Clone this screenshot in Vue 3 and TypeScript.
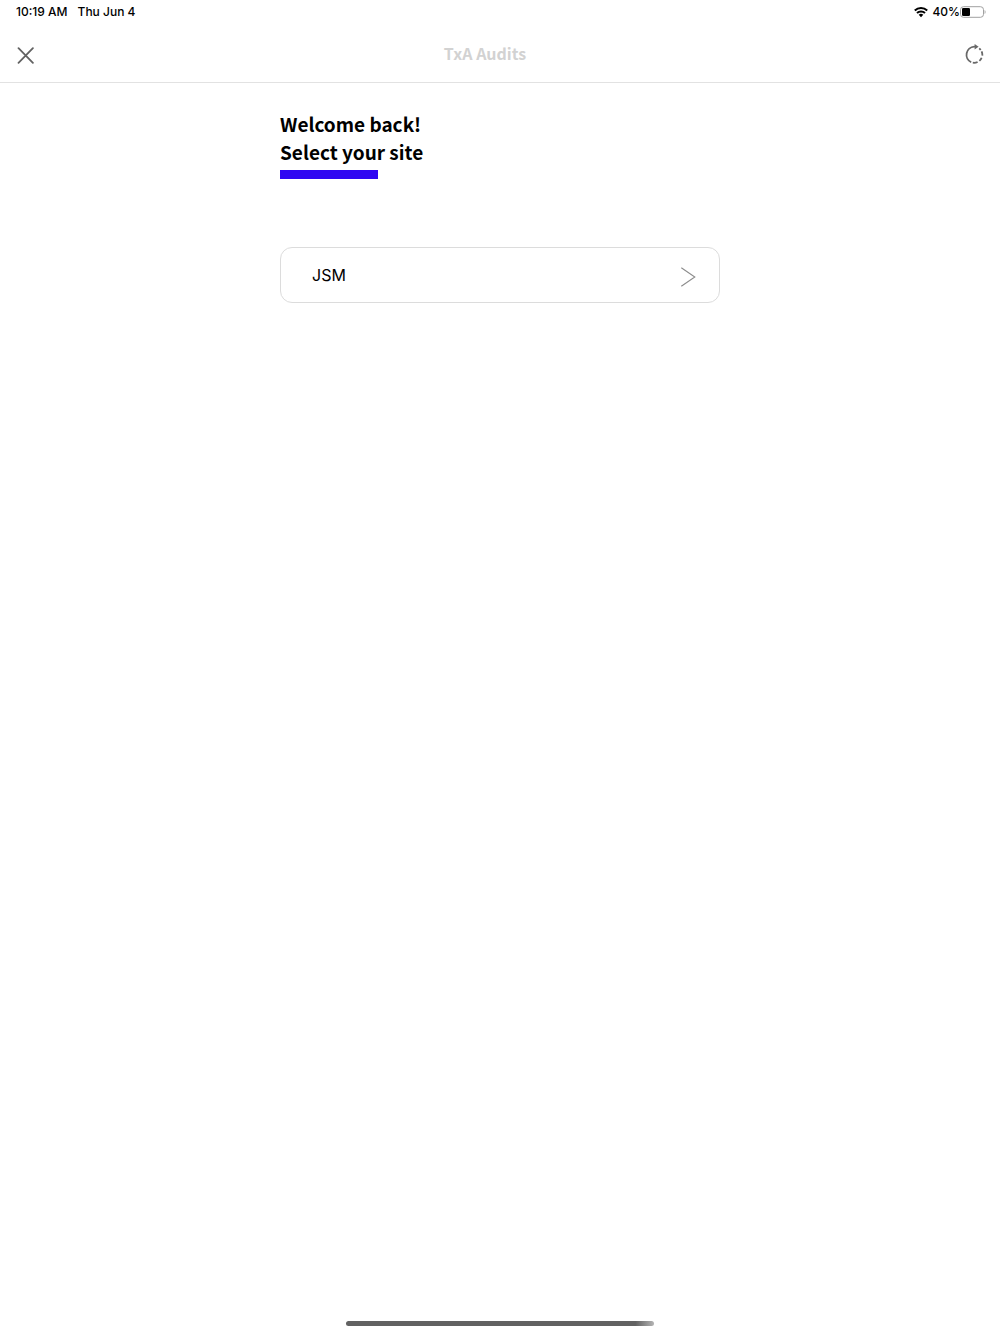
<script setup lang="ts">
import { ref } from 'vue'

interface Site {
  id: number
  name: string
}

const time = '10:19 AM'
const date = 'Thu Jun 4'
const battery = 40
const sites = ref<Site[]>([{ id: 1, name: 'JSM' }])
</script>

<template>
  <div class="screen">
    <div class="status">
      <div class="clock">
        <span>{{ time }}</span>
        <span>{{ date }}</span>
      </div>
      <div class="power">
        <svg class="wifi" width="14" height="12" viewBox="0 0 14 12" aria-hidden="true">
          <path d="M0.8 4.5a8.9 8.9 0 0 1 12.4 0M3 7a5.8 5.8 0 0 1 8 0" fill="none" stroke="#000" stroke-width="2" />
          <path d="M4.7 8.8a3.3 3.3 0 0 1 4.6 0L7 11.2z" fill="#000" />
        </svg>
        <span>{{ battery }}%</span>
        <svg width="26" height="12" viewBox="0 0 26 12" aria-hidden="true">
          <rect x="0.5" y="0.7" width="23" height="10.6" rx="3" fill="none" stroke="#a0a0a0" />
          <rect x="2" y="2" width="8" height="8" rx="1.3" fill="#000" />
          <path d="M24.6 4v4c1.3-.6 1.3-3.4 0-4z" fill="#a0a0a0" />
        </svg>
      </div>
    </div>

    <header class="bar">
      <button class="close" type="button" aria-label="Close">
        <svg width="18" height="18" viewBox="0 0 18 18" aria-hidden="true">
          <path d="M1.5 1.2l14.4 14.6M15.9 1.2L1.5 15.8" stroke="#626262" stroke-width="1.8" stroke-linecap="round" />
        </svg>
      </button>
      <h1 class="title">TxA Audits</h1>
      <button class="refresh" type="button" aria-label="Refresh">
        <svg width="20" height="20" viewBox="0 0 20 20" aria-hidden="true">
          <g fill="none" stroke="#686868" stroke-width="1.8">
            <path d="M12 2.6H10.2A8.2 8.2 0 0 0 7.2 18.2" />
            <path d="M8.8 18.7a8.4 8.4 0 0 0 4.8-.7M15.4 16.9a8.4 8.4 0 0 0 2.2-3.2M18.3 11.6a8.4 8.4 0 0 0-.7-4.2M16.7 6a8.4 8.4 0 0 0-1.5-1.6" />
          </g>
          <path d="M10.6 0l4 2.7-4 2.7z" fill="#686868" />
        </svg>
      </button>
    </header>

    <main class="content">
      <h2 class="heading">Welcome back!<br />Select your site</h2>
      <div class="accent"></div>
      <ul class="sites">
        <li v-for="site in sites" :key="site.id">
          <button class="site" type="button">
            <span>{{ site.name }}</span>
            <svg class="chevron" width="16" height="20" viewBox="0 0 16 20" aria-hidden="true">
              <path d="M1.3 0.7L14.8 10L1.3 19.3" fill="none" stroke="#8c8c8c" stroke-width="1.1" />
            </svg>
          </button>
        </li>
      </ul>
    </main>

    <div class="home"></div>
  </div>
</template>

<style>
body {
  margin: 0;
  background: #fff;
}
</style>

<style scoped>
.screen {
  display: flex;
  flex-direction: column;
  box-sizing: border-box;
  min-height: 100vh;
  padding-bottom: 8px;
  color: #000;
  font-family: Inter, "Liberation Sans", sans-serif;
}
button {
  margin: 0;
  padding: 0;
  border: 0;
  background: none;
  color: inherit;
  font: inherit;
  cursor: pointer;
}
svg {
  display: block;
}
.status {
  display: flex;
  justify-content: space-between;
  align-items: center;
  height: 24px;
  padding: 0 14px 0 16px;
  font-size: 12px;
  font-weight: 500;
  line-height: 14px;
}
.clock {
  display: flex;
  gap: 10px;
}
.power {
  display: flex;
  align-items: center;
}
.wifi {
  margin-right: 4px;
}
.bar {
  display: flex;
  align-items: center;
  height: 58px;
  border-bottom: 1px solid #e2e2e2;
}
.close {
  width: 50px;
  padding: 5px 0 0 17px;
}
.title {
  flex: 1;
  margin: 0;
  color: #d2d2d2;
  font-family: "Noto Sans CJK KR", sans-serif;
  font-size: 16px;
  font-weight: 700;
  line-height: 24px;
  text-align: center;
}
.refresh {
  display: flex;
  justify-content: flex-end;
  width: 80px;
  padding: 2px 16px 0 0;
}
.content {
  flex: 1;
  width: 44%;
  margin: 0 auto;
  padding-top: 27px;
}
.heading {
  margin: 0;
  font-family: "Noto Sans CJK KR", sans-serif;
  font-size: 19px;
  font-weight: 700;
  line-height: 28px;
}
.accent {
  width: 98px;
  height: 9px;
  margin-top: 4px;
  background: #2f06f2;
}
.sites {
  margin: 68px 0 0;
  padding: 0;
  list-style: none;
}
.site {
  display: flex;
  justify-content: space-between;
  align-items: center;
  box-sizing: border-box;
  width: 100%;
  height: 56px;
  padding: 0 23px 0 31px;
  border: 1px solid #dcdcdc;
  border-radius: 12px;
  font-size: 16px;
}
.chevron {
  margin-top: 4px;
}
.home {
  width: 308px;
  height: 5px;
  margin: 0 auto;
  border-radius: 3px;
  background: linear-gradient(to right, #626262 94%, #b4b4b4);
}
</style>
